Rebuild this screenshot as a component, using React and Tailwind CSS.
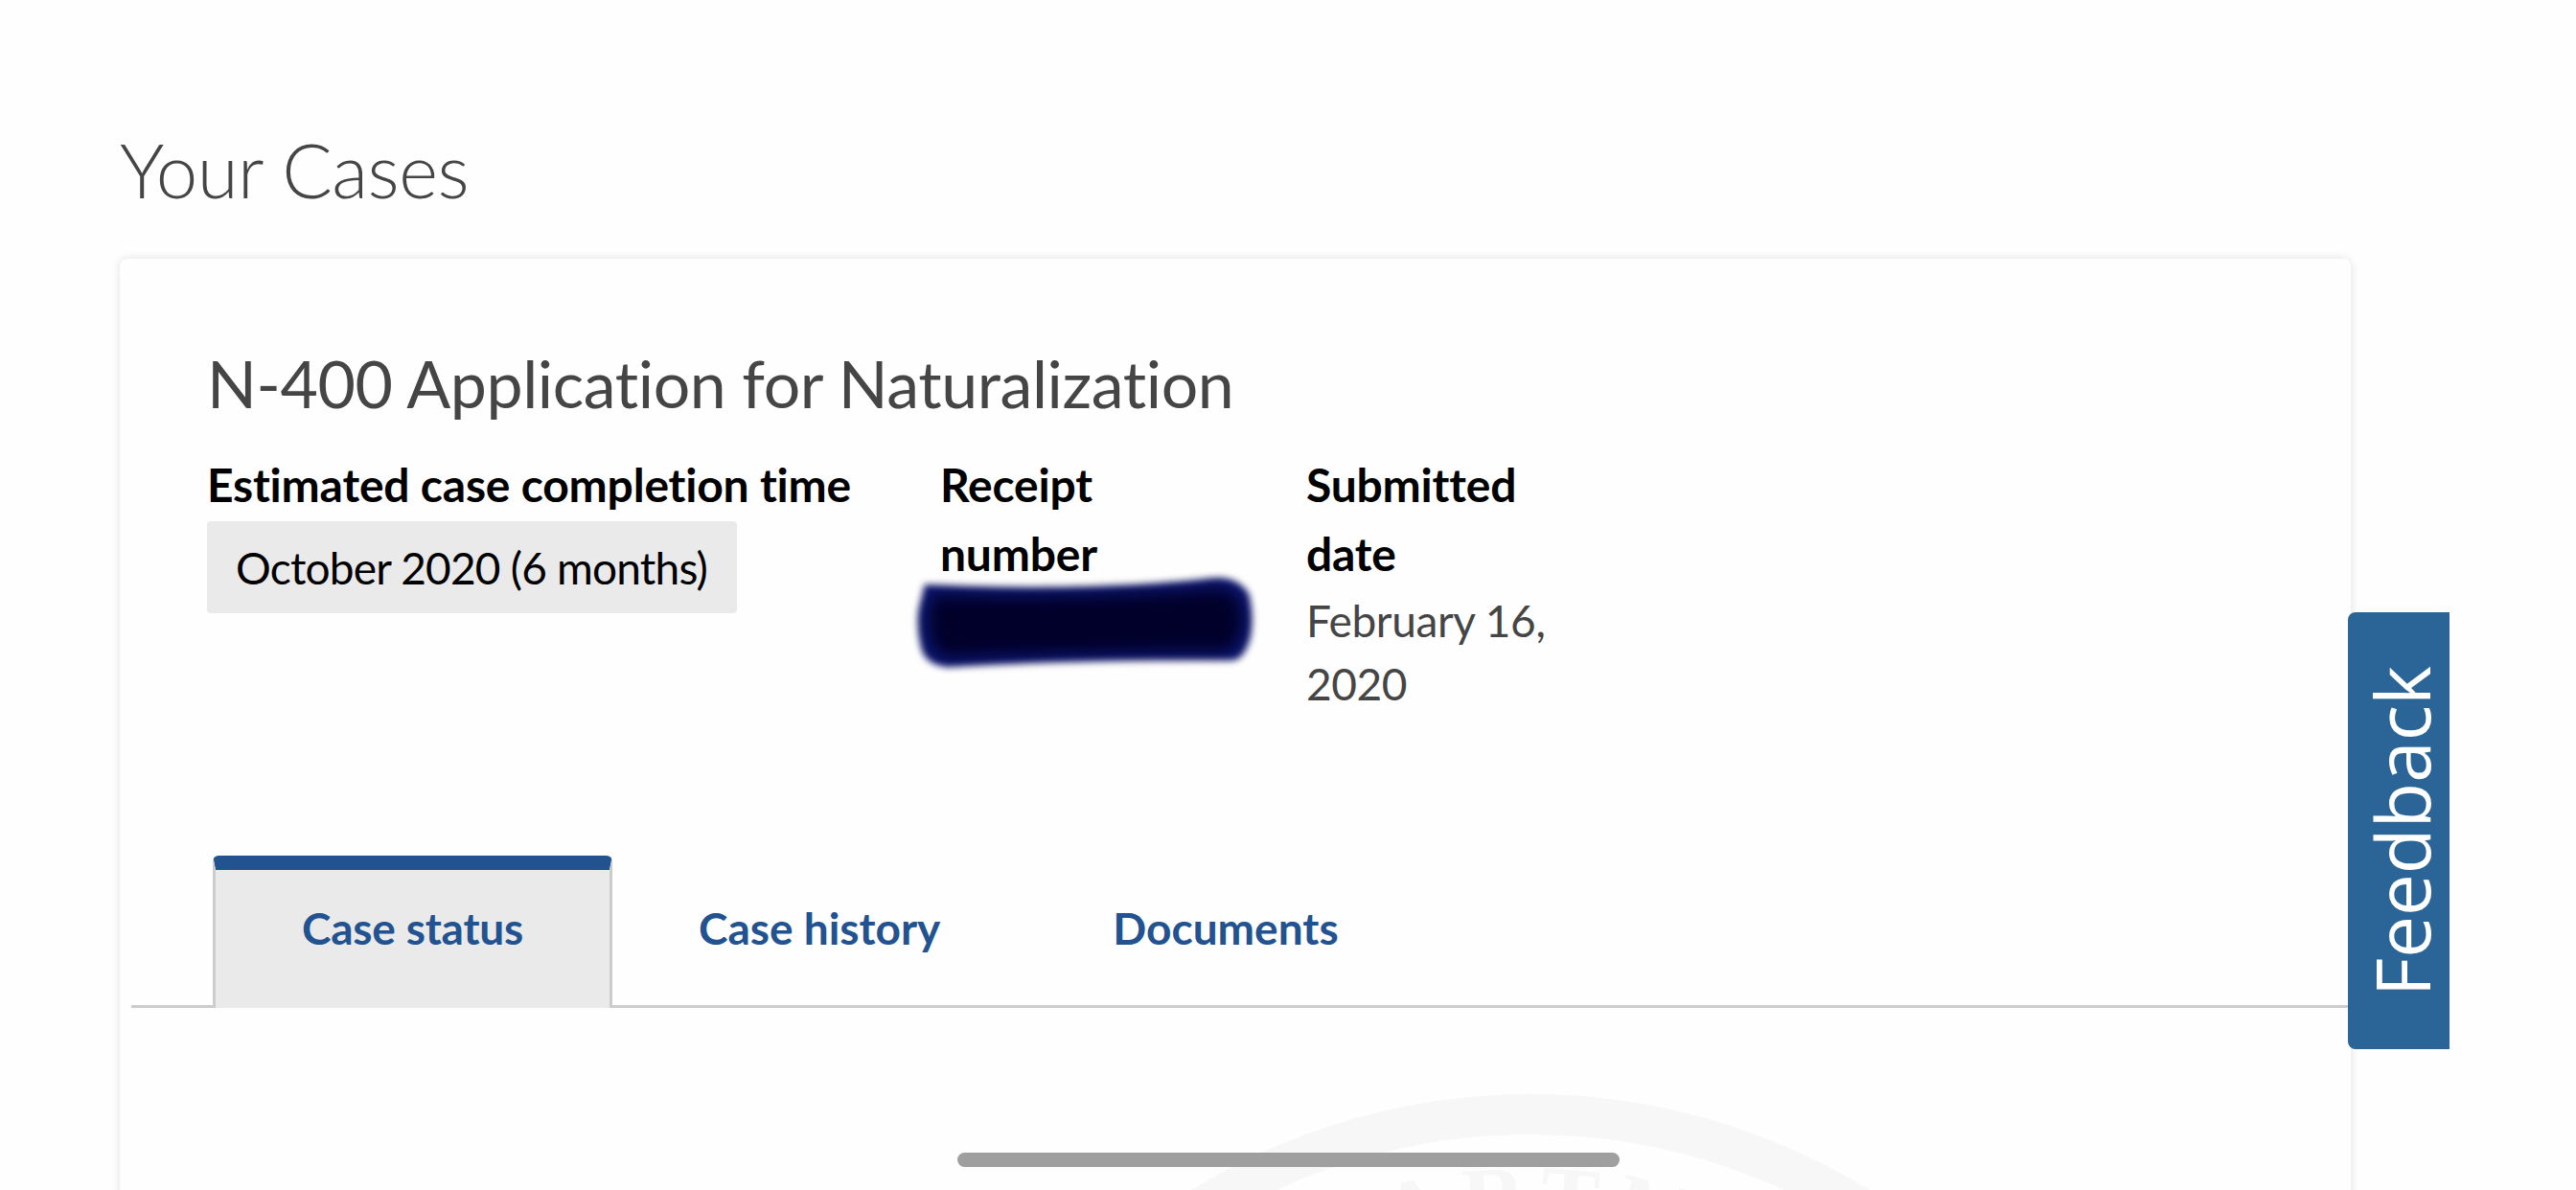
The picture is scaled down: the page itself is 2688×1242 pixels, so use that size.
import React from 'react';

const Field = ({ label, className, children }) => (
    <div className={className}>
        <div className="text-[48px] leading-[72px] font-bold text-black tracking-[-0.2px]">{label}</div>
        {children}
    </div>
);

const Tab = ({ active, className, children }) => (
    <div
        className={
            active
                ? 'w-[417px] h-[159px] -mb-[3px] pb-[24px] flex items-center justify-center rounded-t-[6px] border-x-[3px] border-t-[15px] border-x-[#cccccc] border-t-[#225290] bg-[#eaeaea] text-[46px] font-bold text-[#225290] tracking-[-0.2px]'
                : `h-[156px] pb-[6px] flex items-center text-[46px] font-bold text-[#225290] ${className}`
        }
    >
        {children}
    </div>
);

// scribble hiding the receipt number
const Redaction = () => (
    <svg className="-ml-[33px] -mt-[21px] w-[369px] h-[112px]" viewBox="949 595 369 112">
        <defs>
            <filter id="soft-edge" x="-10%" y="-30%" width="120%" height="160%">
                <feGaussianBlur stdDeviation="3.5" />
            </filter>
            <filter id="soft-core" x="-10%" y="-30%" width="120%" height="160%">
                <feGaussianBlur stdDeviation="8" />
            </filter>
        </defs>
        <path
            filter="url(#soft-edge)"
            fill="#0b1670"
            d="M966 612 C1060 618 1180 616 1262 606 C1280 603 1296 608 1304 622 C1308 640 1308 660 1304 672 C1300 684 1294 692 1284 691 C1190 690 1080 692 990 698 C972 696 964 688 962 676 C958 660 958 640 962 630 Z"
        />
        <path
            filter="url(#soft-core)"
            fill="#00002a"
            d="M976 622 C1060 626 1180 624 1270 616 C1290 616 1298 630 1298 645 C1298 665 1292 680 1280 682 C1190 682 1080 684 990 688 C974 684 970 670 970 650 C970 640 970 630 976 622 Z"
        />
    </svg>
);

const Seal = () => (
    <svg className="ml-[972px] mt-[82px] w-[1000px] h-[110px] text-[#f7f7f7]" viewBox="1097 1132 1000 110">
        <circle cx="1597" cy="1816" r="655" fill="none" stroke="currentColor" strokeWidth="42" />
        <path id="seal-arc" d="M 1059 1816 A 538 538 0 0 1 2135 1816" fill="none" />
        <text fontFamily="'Liberation Serif', serif" fontSize="92" fontWeight="700" letterSpacing="14" fill="currentColor" textAnchor="middle">
            <textPath href="#seal-arc" startOffset="51%">ARTM</textPath>
        </text>
    </svg>
);

export default function App() {
    return (
        <div className="relative h-[1242px] w-[2688px] overflow-hidden bg-[#fefefe] font-['Lato',sans-serif]">
            <main className="pl-[125px] pt-[125px]">
                <h1 className="text-[78px] leading-[104px] font-light text-[#454545] tracking-[-0.5px]">Your Cases</h1>
                <section className="mt-[41px] h-[1000px] w-[2328px] rounded-[8px] bg-[#fefefe] shadow-[0_0_10px_rgba(0,0,0,0.12)]">
                    <div className="pl-[91px] pt-[82px]">
                        <h2 className="text-[68px] leading-[96px] font-normal text-[#454545] tracking-[-0.4px]">N-400 Application for Naturalization</h2>
                        <div className="flex mt-[22px] h-[426px]">
                            <Field label="Estimated case completion time" className="w-[765px]">
                                <div className="mt-[2px] w-[553px] h-[96px] flex items-center pl-[30px] rounded-[4px] bg-[#eaeaea] text-[46px] text-black tracking-[-0.8px]">October 2020 (6 months)</div>
                            </Field>
                            <Field label="Receipt number" className="w-[382px] pr-[200px]">
                                <Redaction />
                            </Field>
                            <Field label="Submitted date" className="w-[270px]">
                                <div className="mt-[1px] text-[46px] leading-[66px] text-[#454545] tracking-[-0.4px]">February 16, 2020</div>
                            </Field>
                        </div>
                    </div>
                    <div className="ml-[12px] mt-[-3px] flex border-b-[3px] border-[#cccccc] pl-[85px]">
                        <Tab active>Case status</Tab>
                        <Tab className="ml-[90px]">Case history</Tab>
                        <Tab className="ml-[180px]">Documents</Tab>
                    </div>
                    <Seal />
                </section>
            </main>
            <div className="absolute left-[2450px] top-[639px] h-[456px] w-[106px] flex items-center justify-center rounded-l-[8px] bg-[#2b6597] pl-[6px]">
                <span className="rotate-180 [writing-mode:vertical-rl] font-['Open_Sans',sans-serif] text-[78px] leading-[78px] text-white">Feedback</span>
            </div>
            <div className="absolute bottom-[24px] left-[999px] h-[15px] w-[691px] rounded-full bg-[#9f9f9f]" />
        </div>
    );
}
